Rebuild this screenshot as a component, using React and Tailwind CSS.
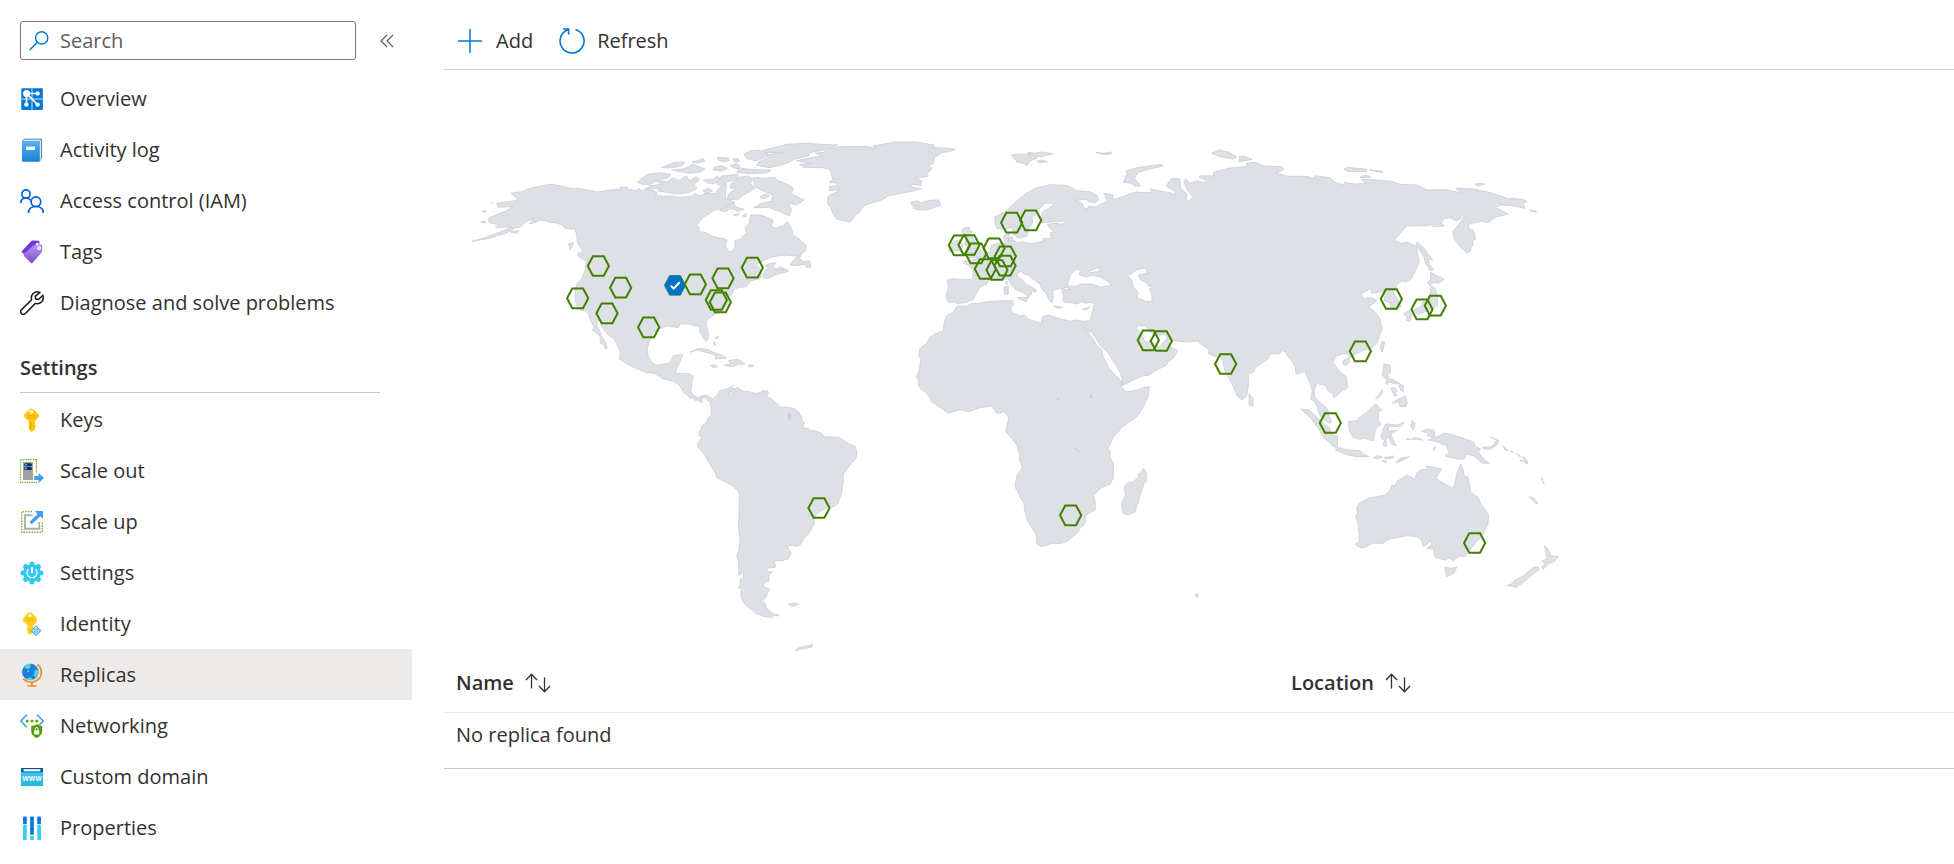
import React from "react";

/* ---------- sidebar icons (24 x 24 grid) ---------- */

function Icon({ children }) {
  return (
    <svg viewBox="0 0 24 24" className="h-6 w-6 shrink-0" aria-hidden="true">
      {children}
    </svg>
  );
}

const OverviewIcon = () => (
  <Icon>
    <rect x="1.3" y="1.3" width="21.6" height="21.6" rx="0.8" fill="#0078d4" />
    <path d="M12 1.3V22.9M1.3 12H22.9" stroke="#83c4f2" strokeWidth="1.4" />
    <path d="M6.5 6.5H17.5M6.5 6.5V17.5M6.5 6.5L17.5 17.5" stroke="#fff" strokeWidth="1.7" />
    <circle cx="6.6" cy="6.4" r="3.5" fill="#fff" />
    <circle cx="17.6" cy="6.4" r="2.2" fill="#fff" />
    <circle cx="6.4" cy="17.6" r="2.2" fill="#fff" />
    <circle cx="17.6" cy="17.6" r="2.2" fill="#fff" />
  </Icon>
);

const ActivityLogIcon = () => (
  <Icon>
    <defs>
      <linearGradient id="logBook" x1="0" y1="0" x2="0" y2="1">
        <stop offset="0" stopColor="#5ab0ee" />
        <stop offset="1" stopColor="#1583d8" />
      </linearGradient>
    </defs>
    <path d="M4 0.8H20.6Q22 0.8 22 2.2V20.5L19.5 23.6V3.2H2Z" fill="#2f6fa5" />
    <path d="M4.2 1.6H20.2L21.2 2.6V20.8L20 22.4V3H3Z" fill="#d7ecfb" />
    <path d="M2 3H19.6V23.8H3.2Q2 23.8 2 22.6Z" fill="url(#logBook)" />
    <rect x="6" y="8.6" width="9" height="3.4" fill="#fff" />
  </Icon>
);

const AccessIcon = () => (
  <Icon>
    <g fill="none" stroke="#015cda" strokeWidth="1.7">
      <circle cx="6" cy="4.9" r="4.1" />
      <path d="M0.8 14C0.8 10.9 3 9 6 9C8 9 9.5 9.8 10.5 11.4" />
      <circle cx="15.9" cy="12.7" r="4.8" />
      <path d="M8.5 24C8.5 20 11.5 17.5 15.9 17.5C20.2 17.5 23.4 20 23.4 24" />
    </g>
  </Icon>
);

const TagsIcon = () => (
  <Icon>
    <defs>
      <linearGradient id="tagFill" x1="0" y1="0" x2="0" y2="1">
        <stop offset="0" stopColor="#b796f9" />
        <stop offset="1" stopColor="#7f4fc4" />
      </linearGradient>
    </defs>
    <path d="M1.5 11.5L11 1.3Q11.7 0.6 12.7 0.6L18.4 0.7Q19.3 0.8 19.3 1.9L19.4 5L4 14.5Z" fill="#7337d8" />
    <path d="M4 13.7L13.8 5.2Q14.6 4.6 15.5 4.6L21 4.5Q22.2 4.6 22.2 5.8V11Q22.2 12 21.5 12.7L12.7 22.8Q11.7 23.8 10.7 22.8L4 16Z" fill="url(#tagFill)" />
    <circle cx="17.2" cy="4.1" r="1.3" fill="#fff" />
    <circle cx="19.1" cy="8.2" r="1.6" fill="#d9c8fb" stroke="#fff" strokeWidth="0.8" />
  </Icon>
);

const WrenchIcon = () => (
  <Icon>
    <path
      d="M20 1.4C17.5 0.4 14.4 0.9 12.7 3C11.4 4.6 11.1 6.7 11.6 8.8L1.6 18.6C0.5 19.8 0.5 21.5 1.6 22.6C2.7 23.6 4.3 23.6 5.4 22.5L15.4 12.4C17.6 13 20 12.5 21.7 10.7C23.4 9 23.7 6.5 22.9 4.3L18.5 8.5L15.6 7.9L15.3 5.2Z"
      fill="#fff"
      stroke="#1b1a19"
      strokeWidth="1.5"
      strokeLinejoin="round"
    />
  </Icon>
);

const KeysIcon = () => (
  <Icon>
    <path d="M9.7 1.2Q11.5 -0.4 13.3 1.2L18.6 6.3Q20 7.8 18.7 9.2L14.9 13V15.5L16 16.4L15 17.6L16 18.6L15 19.8V21.6L11.7 24L8.8 21.3V13L4.4 9.2Q3 7.8 4.4 6.3Z" fill="#ffc80e" />
    <circle cx="11.5" cy="3.8" r="1.7" fill="#fff" />
    <path d="M7.4 7.9H15.6M7.4 9.9H15.6" stroke="#f5a300" strokeWidth="1" />
    <path d="M10.8 13.5V21.5" stroke="#f59b00" strokeWidth="1.2" />
  </Icon>
);

const ScaleOutIcon = () => (
  <Icon>
    <path d="M0.6 0.6H16.4V14M0.6 0.6V23.4H17" fill="none" stroke="#76bc2d" strokeWidth="1.2" strokeDasharray="1.5 0.9" />
    <rect x="3" y="3" width="10" height="18" fill="#a0a0a0" />
    <rect x="4" y="4.2" width="8" height="3" rx="1.5" fill="#003067" />
    <rect x="4" y="8" width="8" height="3" rx="1.5" fill="#003067" />
    <circle cx="6" cy="5.7" r="0.9" fill="#50e6ff" />
    <circle cx="6" cy="9.5" r="0.9" fill="#50e6ff" />
    <path d="M14.3 17H18.7V14L24 19L18.7 24V21H14.3Z" fill="#3f9ff0" />
  </Icon>
);

const ScaleUpIcon = () => (
  <Icon>
    <path d="M12 1.6H1.8V22.2H22.2V12" fill="none" stroke="#76bc2d" strokeWidth="1.4" strokeDasharray="1.6 1.1" />
    <path d="M12.5 5.2H5V18.7H19.2V12" fill="none" stroke="#b0b0b0" strokeWidth="1.9" />
    <path d="M14.8 1H23V8.9L20.3 6.3L11.7 14.2L9.5 12L17.6 3.9Z" fill="#3f9ff0" />
  </Icon>
);

const COGS = [0, 45, 90, 135, 180, 225, 270, 315];

const SettingsIcon = () => (
  <Icon>
    <g fill="#32c8ee">
      <circle cx="12" cy="12" r="9" />
      {COGS.map((a) => (
        <rect key={a} x="9.7" y="0.7" width="4.6" height="5" rx="1.2" transform={`rotate(${a} 12 12)`} />
      ))}
    </g>
    <path d="M8.3 8.3A5 5 0 1 0 15.7 8.3" fill="none" stroke="#fff" strokeWidth="1.3" />
    <path d="M12 6V12" stroke="#fff" strokeWidth="1.9" />
  </Icon>
);

const IdentityIcon = () => (
  <Icon>
    <path d="M8 1Q10 -0.6 12 1L16.2 5.2Q17.4 6.5 16.8 8L16.4 10.4L13 13.5V21.3L10.4 22.8L6.5 20.2L8 18.7L6.5 17L7.8 15.4L7 13.5V12.6L3.6 9.8Q2.6 8 3 6.4Z" fill="#ffd01d" />
    <circle cx="10" cy="3.4" r="1.5" fill="#fff" />
    <path d="M6 6.8H14M6 8.8H14" stroke="#e8b200" strokeWidth="0.9" />
    <path d="M16 13.2L21.5 18.8L16 24.2L10.5 18.8Z" fill="#5aaed8" />
    <path d="M16 15V22.5M12.8 18.8H19.2M16 15L19.2 18.8L16 22.5L12.8 18.8Z" stroke="#d8f4ff" strokeWidth="0.7" fill="none" />
  </Icon>
);

const ReplicasIcon = () => (
  <Icon>
    <path d="M17.5 1.5C22.8 5.5 22.3 13.5 17.5 17C13 20.2 7.500 19.5 3.2 16" fill="none" stroke="#f08a24" strokeWidth="1.7" />
    <path d="M12 19V22.5M7.3 23H16.7" stroke="#f08a24" strokeWidth="1.7" />
    <circle cx="10.3" cy="9" r="8.3" fill="#1f7fe0" />
    <path d="M5.5 2.5C7 1 9 0.5 10.5 0.9L10 5L7.5 6L4.5 5Z" fill="#4fd5c9" />
    <path d="M15 6.5L18.3 7.5Q18.9 12 16 14.8L13.5 12.5Z" fill="#4fd5c9" />
    <path d="M7 15L11.5 14.5L13 16.7Q10 17.8 7 16.5Z" fill="#4fd5c9" />
    <circle cx="8" cy="8.2" r="1" fill="#4fd5c9" />
  </Icon>
);

const NetworkingIcon = () => (
  <Icon>
    <path d="M7 0.7L0.9 7L7 13.3M17 0.7L23.1 7L19 11.2" fill="none" stroke="#4a9fd8" strokeWidth="1.6" />
    <circle cx="7.2" cy="7" r="1.6" fill="#5ea60f" />
    <circle cx="12" cy="7" r="1.6" fill="#5ea60f" />
    <circle cx="16.8" cy="7" r="1.6" fill="#5ea60f" />
    <path d="M16.7 10.3Q19.5 12 22.2 12V17C22.2 20.5 19.5 22.8 16.7 24C13.9 22.8 11.2 20.5 11.2 17V12Q14 12 16.7 10.3Z" fill="#4f9d0a" />
    <rect x="14.2" y="16.3" width="5" height="4.2" fill="#fff" />
    <path d="M15.3 16.3V14.9A1.4 1.4 0 0 1 18.1 14.9V16.3" fill="none" stroke="#fff" strokeWidth="1" />
  </Icon>
);

const DomainIcon = () => (
  <Icon>
    <defs>
      <linearGradient id="domainFill" x1="0" y1="0" x2="0" y2="1">
        <stop offset="0" stopColor="#37c9ee" />
        <stop offset="1" stopColor="#22b8dc" />
      </linearGradient>
    </defs>
    <rect x="1" y="3" width="22" height="5" fill="#005ba1" />
    <rect x="3.6" y="4.2" width="16.800" height="2.2" fill="#fff" />
    <rect x="1" y="7.3" width="22" height="13.7" fill="url(#domainFill)" />
    <text x="12" y="16" textAnchor="middle" fontSize="8" fontWeight="600" fill="#fff">
      www
    </text>
  </Icon>
);

const PropertiesIcon = () => (
  <Icon>
    <g fill="#0f7ad6">
      <rect x="3" y="0.4" width="3.8" height="7.8" rx="0.8" />
      <rect x="10.1" y="0.4" width="3.8" height="18.4" rx="0.8" />
      <rect x="17.2" y="0.4" width="3.8" height="7.8" rx="0.8" />
    </g>
    <g fill="#3ccdf2">
      <rect x="3" y="9" width="3.8" height="15" rx="0.8" />
      <rect x="10.1" y="20" width="3.8" height="4" rx="0.8" />
      <rect x="17.2" y="9" width="3.8" height="15" rx="0.8" />
    </g>
  </Icon>
);

/* ---------- navigation ---------- */

const GENERAL = [
  ["Overview", OverviewIcon],
  ["Activity log", ActivityLogIcon],
  ["Access control (IAM)", AccessIcon],
  ["Tags", TagsIcon],
  ["Diagnose and solve problems", WrenchIcon],
];

const SETTINGS = [
  ["Keys", KeysIcon],
  ["Scale out", ScaleOutIcon],
  ["Scale up", ScaleUpIcon],
  ["Settings", SettingsIcon],
  ["Identity", IdentityIcon],
  ["Replicas", ReplicasIcon],
  ["Networking", NetworkingIcon],
  ["Custom domain", DomainIcon],
  ["Properties", PropertiesIcon],
];

function NavList({ items }) {
  return (
    <ul>
      {items.map(([label, Glyph]) => {
        const active = label === "Replicas";
        return (
          <li key={label}>
            <a
              href={`#${label}`}
              aria-current={active ? "page" : undefined}
              className={
                active
                  ? "flex h-[51px] items-center gap-4 bg-[#edebe9] px-5"
                  : "flex h-[51px] items-center gap-4 px-5 hover:bg-[#f3f2f1]"
              }
            >
              <Glyph />
              <span>{label}</span>
            </a>
          </li>
        );
      })}
    </ul>
  );
}

function Sidebar() {
  return (
    <nav className="w-[412px] shrink-0" aria-label="Resource menu">
      <div className="flex h-[73px] items-center gap-6 pl-5 pt-2">
        <label className="flex h-[39px] w-[336px] items-center gap-[11px] rounded-[3px] border border-[#7a7876] px-2">
          <svg viewBox="0 0 20 20" className="h-5 w-5 shrink-0" aria-hidden="true">
            <circle cx="12.7" cy="6.9" r="6.1" fill="none" stroke="#0078d4" strokeWidth="1.4" />
            <path d="M8.3 11.3L0.7 19" stroke="#0078d4" strokeWidth="1.5" />
          </svg>
          <input
            type="text"
            placeholder="Search"
            aria-label="Search"
            className="w-full bg-transparent outline-none placeholder:text-[#605e5c]"
          />
        </label>
        <button type="button" aria-label="Collapse menu" className="h-4 w-4">
          <svg viewBox="0 0 16 16" className="h-4 w-4" fill="none" stroke="#605e5c" strokeWidth="1.2">
            <path d="M7 2L1 8L7 14M13 2L7 8L13 14" />
          </svg>
        </button>
      </div>
      <NavList items={GENERAL} />
      <h2 className="mb-px ml-5 mr-8 flex h-[65px] items-end border-b border-[#c8c6c4] pb-2.5 font-semibold leading-7">
        Settings
      </h2>
      <NavList items={SETTINGS} />
    </nav>
  );
}

/* ---------- map ---------- */

/* The outlines are drawn on tiles, three units to one map unit. */
const TILES = {
  northAmerica: [460, 120],
  greenland: [760, 120],
  southAmerica: [640, 360],
  europe: [900, 130],
  africa: [900, 370],
  asia: [1200, 130],
  oceania: [1260, 360],
};

function place(tile, x, y) {
  const [ox, oy] = TILES[tile];
  return [ox + x / 3, oy + y / 3];
}

function trace(segments) {
  const points = segments.flatMap(([tile, text]) =>
    text
      .trim()
      .split(/\s+/)
      .map((pair) => {
        const [x, y] = pair.split(",").map(Number);
        return place(tile, x, y)
          .map((n) => n.toFixed(1))
          .join(" ");
      })
  );
  return `M${points.join("L")}Z`;
}

const CONTINENTS = [
  [
    ["northAmerica", "36,364 62,359 85,356 110,347 130,343 150,334 165,324 180,322 195,306 222,295 208,312 222,309 240,300 258,302 270,308 285,308 305,314 315,324 328,327 345,327 350,345 352,368 360,380 368,390 360,400 355,398 372,410 385,420 378,430 376,450 365,475 352,490 346,510 346,540 352,560 362,570 375,572 385,580 392,602 402,622 396,630 412,642 420,648 420,668 432,676 437,688 442,684 436,665 428,655 420,635 412,618 410,600 420,602 425,620 445,645 460,655 475,680 482,700 478,716 500,732 530,746 560,758 585,760 600,770 610,777 640,783 655,792 670,812"],
    ["southAmerica", "128,88 132,100 140,102 150,114 162,115 165,121 175,120 182,128 188,122 184,115 198,113 203,122 208,124 214,140 214,165 205,173 198,190 185,197 184,207 177,215 177,228 187,228 182,238 173,248 175,264 190,278 205,305 225,338 231,353 260,368 278,378 293,392 298,400 298,430 297,470 295,497 298,520 300,540 298,565 295,577 290,585 296,605 296,645 302,645 304,635 310,637 310,657 302,657 299,680 294,683 308,686 302,692 303,712 312,728 318,737 328,743 345,758 365,768 392,773 403,766 418,768 413,763 403,764 388,752 374,738 380,738 368,722 380,708 382,700 390,690 386,685 375,683 370,675 376,666 386,664 386,645 398,636 385,635 380,625 405,622 407,617 403,602 425,602 445,596 453,580 452,573 445,566 444,560 432,556 432,550 440,557 458,556 470,559 480,555 492,535 505,522 522,494 522,474 530,462 540,453 560,443 585,438 595,428 598,415 605,402 606,385 610,370 610,342 630,315 648,295 650,275 645,258 628,252 610,240 598,233 575,231 551,230 545,220 525,213 512,210 508,215 505,205 487,204 494,188 487,185 485,170 475,155 460,145 440,142 420,141 405,125 395,118 382,110 378,102 384,102 384,92 365,94 365,98 345,100 328,95 310,93 298,88 293,80 287,86 272,84 280,76 268,84 240,92 232,105 218,116 210,112 195,105 172,113 160,104 152,94 155,70 160,50 150,42 125,40 105,42 112,18"],
    ["northAmerica", "650,742 658,730 668,704 640,707 634,722 625,730 590,736 575,727 565,710 561,690 568,665 575,650 578,638 600,626 620,618 640,620 655,624 660,612 690,612 705,617 718,618 720,636 730,655 738,664 745,655 744,635 738,610 742,598 765,582 785,572 800,560 812,545 806,530 820,520 818,512 835,502 860,500 872,482 900,476 905,455 893,438 878,443 895,430 925,415 940,410 970,405 1010,408 1035,395 1040,378 1015,355 995,342 998,336 988,315 982,305 968,318 948,325 933,318 940,300 905,286 872,284 868,310 855,322 860,338 840,358 825,362 825,380 815,395 803,392 796,378 800,358 780,355 755,347 735,337 718,335 716,320 708,318 730,292 765,270 790,265 825,248 808,240 795,232 800,190 780,202 765,220 738,220 720,228 705,220 695,230 655,232 640,228 605,228 583,226 592,220 584,213 560,207 545,212 535,205 528,212 505,208 502,202 480,203 482,208 450,210 411,216 375,208 330,204 305,198 275,193 240,198 200,208 185,215 152,220 172,235 168,242 110,250 115,262 158,260 140,272 108,285 88,293 85,303 92,310 115,313 112,318 105,322 130,322 155,320 128,333 95,345 70,355"],
  ],
  [["northAmerica", "905,470 918,450 925,440 915,438 930,430 948,428 938,440 950,450 982,448 985,454 955,462 920,476"]],
  [["greenland", "108,122 150,114 185,108 165,100 190,97 205,88 240,80 315,79 350,85 340,78 370,72 405,66 470,66 525,76 515,82 560,85 585,88 580,92 545,98 525,112 520,130 505,138 515,143 512,152 500,160 505,168 495,171 468,172 485,183 483,197 458,192 452,200 472,204 485,206 450,215 400,224 385,228 365,240 318,254 305,265 300,275 285,285 283,292 270,307 240,299 228,296 218,280 212,262 202,248 205,228 230,215 240,208 210,212 208,200 230,197 232,190 208,187 218,178 210,150 190,143 130,142 118,133 155,130"]],
  [["greenland", "453,246 470,242 485,248 510,241 535,240 543,255 500,271 465,268 458,262 475,258 455,256"]],
  [
    ["europe", "552,588 560,605 575,620 590,645 605,660 610,680 625,710 635,722 645,735 668,758"],
    ["africa", "665,52 678,66 715,59 730,53 748,50 745,75 730,112 715,135 700,148 665,172 655,185 638,205 632,220 624,235 630,242 630,260 640,282 640,325 630,342 605,352 580,378 587,400 585,420 558,435 556,455 552,465 540,475 530,490 505,512 485,520 455,520 425,530 410,522 410,497 395,472 382,452 375,425 372,400 362,385 355,368 347,355 345,345 350,320 357,308 367,290 358,270 360,255 350,225 335,205 318,186 320,170 325,150 325,140 312,124 305,128 290,130 275,108 240,113 220,120 205,126 180,118 160,125 145,130 125,115 110,105 95,95 90,82 75,65 60,55 55,45 56,30 48,22 58,0"],
    ["europe", "60,705 62,685 56,675 60,655 80,640 90,622 105,612 130,602 133,575 140,558 160,547 168,532 178,527 195,531 215,520 240,520 260,515 310,512 338,512 340,522 332,535 337,548 360,558 375,556 385,568 422,580 428,560 445,555 475,565 510,574 530,570 550,574 570,572 576,550 583,522 570,517 555,520 545,515 530,522 505,517 495,518 488,510 492,498 486,488 487,478 480,474 457,482 460,500 456,518 448,512 440,493 425,475 420,462 395,445 385,435 372,432 362,424 352,430 352,442 365,448 378,462 410,480 405,487 392,480 395,492 384,502 375,490 345,477 335,465 325,447 300,447 285,450 265,452 260,462 240,470 230,490 220,508 200,516 180,520 172,522 165,515 145,517 138,500 143,480 145,470 142,450 155,446 190,449 215,448 219,440 219,418 205,405 190,400 190,394 220,390 250,378 270,365 275,345 300,340 318,338 310,325 315,315 328,310 325,335 345,332 350,338 368,335 395,342 428,333 430,325 455,325 450,308 462,307 447,292 442,283 465,280 485,283 498,278 490,273 425,278 420,262 432,242 462,225 455,219 435,220 425,228 410,250 395,262 398,278 385,300 382,318 355,325 342,315 335,290 318,300 292,295 286,285 284,260 310,248 345,218 380,188 410,173 450,164 500,166 530,182 570,185 592,198 595,210 585,218 565,215 560,208 528,210 550,222 548,232 562,237 566,228 590,232 595,225 610,220 620,210 612,190 640,195 636,207 650,206 695,190 710,186 740,188 757,185 750,177 810,188 828,194 822,182 798,168 815,145 838,146 842,175 862,192 858,210 870,214 878,200 860,178 852,155 857,146 870,160 890,152 915,158 918,150 898,142 900,137 942,138 940,127 985,115 1020,112"],
    ["asia", "130,110 140,108 140,100 160,97 175,100 185,107 245,110 252,118 228,130 265,139 320,139 343,146 345,137 390,143 405,157 432,165 433,157 465,162 500,160 485,150 497,148 575,154 600,163 650,165 680,180 735,179 782,188 768,175 820,177 880,190 935,210 928,205 968,208 980,215 970,220 974,235 940,227 905,225 900,217 905,225 885,232 925,252 885,262 865,278 845,273 805,283 808,298 820,300 825,315 827,328 817,332 820,345 812,350 812,362 802,370 780,350 762,325 758,305 775,285 790,265 792,258 787,253 783,265 768,273 750,263 732,265 724,280 733,288 700,290 690,284 680,287 620,288 582,332 605,340 625,337 650,350 652,370 658,395 650,415 635,445 620,455 605,452 588,468 592,478 578,487 600,520 602,532 580,540 572,532 572,520 552,512 556,493 545,485 515,490 512,475 482,492 492,506 515,503 530,512 506,532 525,545 542,570 542,583 546,588 545,600 530,640 515,653 485,663 470,670 455,680 447,685 448,675 432,670 410,678 398,695 415,720 440,742 442,775 430,780 403,803 400,793 385,782 375,765 357,762 352,754 345,775"],
    ["oceania", "162,95 164,110 174,122 190,135 202,145 207,168 215,185 208,190 190,180 176,158 170,135 160,122 152,117 157,95 150,68 145,60 135,32 120,40 108,42 105,20 97,5"],
    ["asia", "275,690 262,678 258,667 243,660 240,671 210,672 205,685 165,715 163,725 145,732 145,770 140,798 125,810 110,795 100,770 85,740 75,722 70,700 62,680 45,680 25,670 28,660 0,640"],
    ["europe", "895,633 860,636 820,632 805,628 795,612 780,615 755,610 735,588 712,586 710,596 722,610 733,630 745,640 752,628 758,648 778,652 800,625 812,652 832,662 820,685 805,695 800,705 760,725 750,735 725,738 700,750 670,765 662,730 650,710 625,670 600,645 585,620 573,605 578,594 568,608"],
  ],
  [["oceania", "286,552 298,545 297,520 293,485 286,468 292,462 290,445 298,430 325,415 375,405 390,392 395,375 405,378 410,365 440,345 465,357 470,340 482,330 505,328 497,318 545,327 527,355 575,384 583,378 592,335 602,312 610,330 612,347 625,352 632,398 655,412 662,432 685,462 685,490 668,525 650,545 625,575 615,590 600,588 580,602 568,594 555,600 525,592 520,568 500,565 515,555 512,543 490,560 484,540 470,530 440,527 405,535 385,538 370,550 340,550 310,564 290,557"]],
];

const ISLANDS = {
  northAmerica: [
    "532,187 562,163 600,158 632,163 622,175 585,182 572,193 545,193",
    "583,180 620,185 640,173 655,182 680,168 688,182 710,170 718,180 700,195 712,205 690,217 650,222 590,212 605,205 556,207 570,197 608,193",
    "605,143 640,128 675,126 665,137 640,143",
    "635,150 670,147 700,133 715,140 735,146 722,156 690,160",
    "696,126 730,116 734,124 712,129",
    "772,112 806,114 808,122 790,125 775,120",
    "758,150 765,140 785,137 802,145 788,153",
    "730,180 760,178 772,168 782,180 758,192 745,190",
    "785,168 835,163 832,178 800,185 785,200 770,192",
    "728,212 745,205 758,212 740,220",
    "818,118 835,115 838,124 824,126",
    "852,104 870,92 900,90 925,102 910,115 885,123 860,115",
    "810,138 830,130 845,145 885,149 933,150 925,158 870,161 830,157 838,149",
    "910,90 940,84 980,73 1040,70 1080,73 1133,75 1110,85 1080,92 1050,98 1045,108 1005,117 985,128 955,137 930,143 890,136 895,127 925,112 918,105 970,97 915,98",
    "812,192 838,172 865,168 880,178 870,190 885,205 868,215 850,225 832,240 800,237 808,220 830,205 812,205",
    "880,172 915,175 945,172 950,180 975,190 1000,203 998,213 990,220 1033,240 1010,255 985,250 995,268 988,288 960,275 925,262 880,263 905,250 935,243 938,225 905,210 885,200",
    "900,230 918,222 928,228 910,237",
    "780,270 818,248 832,263 852,268 835,273 812,266 795,276",
    "820,285 838,280 830,287",
    "848,288 858,280 858,290",
    "990,435 1005,415 1025,402 1018,415 1032,425 1048,422 1053,440 1040,443 1032,433 1015,437",
    "943,450 975,448 962,440",
    "325,372 340,368 338,378 330,388 328,378",
    "352,403 375,406 390,420 392,430 368,418 355,410",
    "66,275 78,271 74,278",
    "62,306 77,304 73,310",
    "152,336 178,331 170,340",
    "96,246 99,249 96,249",
    "690,697 715,685 742,688 760,697 790,707 800,715 765,716 768,706 735,696 712,690",
    "805,722 835,718 855,733 835,733 818,740 792,736 812,732",
    "752,736 765,734 773,740 758,742",
    "865,735 880,735 878,740 866,740",
    "765,653 775,648 773,656",
    "762,665 767,678 761,672",
  ],
  southAmerica: [
    "445,733 462,729 477,733 455,739",
    "465,872 480,862 505,858 518,852 516,860 495,865",
  ],
  europe: [
    "185,300 195,293 210,292 208,303 218,305 207,315 216,318 228,340 240,358 255,372 248,380 210,384 200,383 215,372 200,365 210,352 195,345 197,325",
    "150,352 160,335 178,330 190,345 183,362 145,363",
    "333,75 360,72 380,75 388,66 405,72 410,85 390,92 380,107 370,100 352,97 345,88",
    "380,72 430,66 458,72 425,80 400,77",
    "410,93 425,90 442,95 420,99",
    "587,67 610,70 635,66 632,72 612,74",
    "670,157 682,130 678,124 710,113 785,103 789,108 745,118 715,127 703,145 722,168 702,168 695,160",
    "935,70 958,60 985,66 1010,80 1000,87 960,80",
    "352,503 385,502 378,516",
    "312,470 325,468 325,492 313,493",
    "316,458 323,453 321,464",
    "548,538 570,530 560,540",
    "460,529 488,532 475,535",
    "325,325 338,320 340,332 328,332",
  ],
  africa: ["730,295 738,305 740,332 732,340 722,370 705,427 685,435 670,430 664,400 677,375 672,355 680,340 700,335 715,322 715,313 724,308"],
  asia: [
    "118,80 135,80 157,88 118,95",
    "432,118 440,112 500,118 500,125 440,124",
    "508,120 548,123 546,128",
    "480,140 495,136 512,141 485,143",
    "825,163 840,159 855,163 835,167",
    "988,239 1010,244 1008,247 992,243",
    "648,345 652,336 672,355 698,390 685,388 688,402 700,418 690,422 675,395 672,380",
    "692,427 718,441 733,448 718,460 700,457 690,467 682,457 692,448",
    "692,468 705,475 712,495 713,525 700,535 675,545 655,553 645,545 640,540 665,528 668,515 688,510",
    "610,552 628,541 635,553 630,575 618,570 622,560",
    "540,650 545,636 554,635 550,655 546,667",
    "430,692 445,684 450,695 438,707 429,702",
    "147,792 160,805 158,828 147,825",
  ],
  oceania: [
    "372,12 390,15 392,35 383,42 385,55 400,60 415,68 410,72 385,65 382,75 377,68 380,60 367,45",
    "392,85 400,82 412,92 405,100 412,105 402,108 398,95",
    "415,68 430,78 430,95 422,90",
    "397,130 412,118 425,115 435,105 442,130 437,140 420,140 415,125",
    "347,117 368,88 367,98 357,110",
    "265,185 290,182 300,170 318,160 345,132 355,138 355,147 367,148 355,158 355,180 364,193 352,200 345,215 340,243 310,233 300,238 278,232 268,212",
    "122,147 148,150 165,167 190,190 210,205 212,222 233,230 232,265 215,255 190,230 172,200 150,172",
    "226,270 235,263 265,270 300,272 308,282 328,290 290,290 255,282",
    "340,293 355,287 367,291 350,297",
    "372,293 403,288 400,293 380,297",
    "408,308 420,295 448,290 430,300",
    "365,302 380,303 377,308",
    "368,208 378,192 410,195 432,187 425,198 385,200 385,214 412,211 392,222 400,240 408,257 395,252 385,230 378,240 380,258 370,258 373,240 364,235",
    "455,182 465,190 460,210 453,200",
    "438,236 450,237 445,240",
    "452,238 470,233 488,240 470,238",
    "520,263 526,260 522,273",
    "485,213 500,208 522,210 525,228 530,232 548,222 562,220 605,233 642,247 645,260 662,267 655,275 670,297 688,310 668,310 640,287 618,283 612,297 595,298 555,288 568,278 560,258 530,245 505,240 520,232 502,228 505,220",
    "668,262 695,260 710,240 692,230 716,243 710,255 690,268 670,267",
    "730,257 745,272 735,270",
    "752,272 760,276 755,277",
    "768,280 783,290 775,287",
    "780,300 792,304 784,305",
    "788,290 797,296 805,313 797,310",
    "843,353 850,357 847,362 853,372",
    "808,410 820,413 834,430 828,431",
    "555,621 572,625 590,621 582,640 560,650",
    "742,676 755,672 765,660 790,648 820,622 835,620 838,628 812,648 805,655 770,682",
    "853,557 865,567 872,587 895,590 885,603 868,610 850,628 844,623 858,608 845,603 862,597",
    "-194,703 -190,713 -184,708 -187,701",
  ],
};

const SEAS = {
  europe: [
    "502,462 510,440 515,430 530,417 546,422 535,432 545,438 562,440 575,435 600,440 630,458 632,467 600,471 575,462 545,462 525,470 505,468",
    "566,424 585,416 602,411 592,425 572,428",
    "488,477 500,472 512,477 498,480",
    "683,437 710,420 735,413 742,422 738,430 715,435 722,450 740,458 745,468 758,470 747,478 755,490 757,513 740,515 710,503 715,487 700,470 695,450",
  ],
  southAmerica: ["272,92 276,96 278,105 274,109 270,102"],
};

const LAKES = {
  southAmerica: ["447,160 453,168 447,180"],
  africa: ["470,84 478,89", "573,75 574,84", "526,235 536,245"],
};

const REGIONS = [
  ["northAmerica", 415, 438],
  ["northAmerica", 482, 503],
  ["northAmerica", 353, 535],
  ["northAmerica", 441, 580],
  ["northAmerica", 566, 622],
  ["northAmerica", 706, 493],
  ["northAmerica", 789, 475],
  ["northAmerica", 769, 540],
  ["northAmerica", 781, 547],
  ["northAmerica", 877, 443],
  ["europe", 335, 278],
  ["europe", 392, 271],
  ["europe", 178, 346],
  ["europe", 207, 345],
  ["europe", 228, 370],
  ["europe", 282, 355],
  ["europe", 316, 379],
  ["europe", 315, 407],
  ["europe", 256, 417],
  ["europe", 291, 420],
  ["europe", 745, 631],
  ["europe", 784, 633],
  ["europe", 977, 702],
  ["asia", 574, 507],
  ["asia", 666, 538],
  ["asia", 706, 527],
  ["asia", 481, 664],
  ["oceania", 211, 189],
  ["oceania", 644, 549],
  ["southAmerica", 537, 444],
  ["africa", 512, 436],
];

const outlines = (groups) =>
  Object.entries(groups).flatMap(([tile, list]) => list.map((text) => trace([[tile, text]])));

const HEXAGON = "M-10.6 0L-5.4 -9.8H5.4L10.6 0L5.4 9.8H-5.4Z";

function WorldMap() {
  const [homeX, homeY] = place("northAmerica", 645, 496);
  return (
    <svg viewBox="444 90 1140 561" className="h-auto w-[1140px] max-w-full" role="img" aria-label="Replica regions">
      <g fill="#dde0e5" stroke="#cdd1d8" strokeWidth="0.9" strokeLinejoin="round">
        {[...CONTINENTS.map(trace), ...outlines(ISLANDS)].map((d) => (
          <path key={d} d={d} />
        ))}
        {outlines(SEAS).map((d) => (
          <path key={d} d={d} fill="#fff" />
        ))}
        {outlines(LAKES).map((d) => (
          <path key={d} d={d} fill="none" stroke="#bcc2cc" />
        ))}
      </g>
      <path d={HEXAGON} transform={`translate(${homeX} ${homeY})`} fill="#0072c6" stroke="#1d7f78" strokeWidth="0.9" />
      <path
        d="M-4.3 0.3L-1.3 3.2L4.8 -3.2"
        transform={`translate(${homeX} ${homeY})`}
        fill="none"
        stroke="#fff"
        strokeWidth="2"
      />
      <g fill="none" stroke="#428000" strokeWidth="2">
        {REGIONS.map(([tile, x, y]) => {
          const [cx, cy] = place(tile, x, y);
          return <path key={`${tile}${x}`} d={HEXAGON} transform={`translate(${cx} ${cy})`} />;
        })}
      </g>
    </svg>
  );
}

/* ---------- main panel ---------- */

function SortIcon() {
  return (
    <svg viewBox="0 0 26 20" className="h-5 w-[26px]" fill="none" stroke="#323130" strokeWidth="1.3" aria-hidden="true">
      <path d="M6.5 15.5V1.5M1 7L6.5 1.3L12 7M19.5 4.5V18.5M14 13L19.5 18.7L25 13" />
    </svg>
  );
}

function HeaderCell({ label, className }) {
  return (
    <th scope="col" className={className}>
      <button type="button" className="flex items-center gap-[11px] font-semibold">
        {label}
        <SortIcon />
      </button>
    </th>
  );
}

export default function App() {
  return (
    <div className="flex min-h-screen overflow-hidden bg-white font-['Segoe_UI','Open_Sans',sans-serif] text-xl leading-7 text-[#323130]">
      <Sidebar />
      <main className="ml-8 min-w-0 flex-1">
        <div className="flex h-[70px] items-center gap-[26px] border-b border-[#d2d0ce] px-3.5 pt-3">
          <button type="button" className="flex items-center gap-3.5">
            <svg viewBox="0 0 24 24" className="h-6 w-6" stroke="#0078d4" strokeWidth="1.5" aria-hidden="true">
              <path d="M12 0V24M0 12H24" />
            </svg>
            Add
          </button>
          <button type="button" className="flex items-center gap-3">
            <svg viewBox="0 0 26 26" className="h-[26px] w-[26px]" fill="none" stroke="#0078d4" strokeWidth="1.6" aria-hidden="true">
              <path d="M16.5 1.5A12 12 0 1 1 9 1.7" />
              <path d="M4 1H9.6V6.6" />
            </svg>
            Refresh
          </button>
        </div>
        <div className="pt-5">
          <WorldMap />
        </div>
        <table className="w-full table-fixed text-left">
          <thead>
            <tr className="h-[61px] border-b border-[#edebe9]">
              <HeaderCell label="Name" className="w-[55.3%] pl-3 pt-1" />
              <HeaderCell label="Location" className="pl-3 pt-1" />
            </tr>
          </thead>
          <tbody>
            <tr className="h-14 border-b border-[#c8c6c4]">
              <td colSpan={2} className="pb-2.5 pl-3">
                No replica found
              </td>
            </tr>
          </tbody>
        </table>
      </main>
    </div>
  );
}
